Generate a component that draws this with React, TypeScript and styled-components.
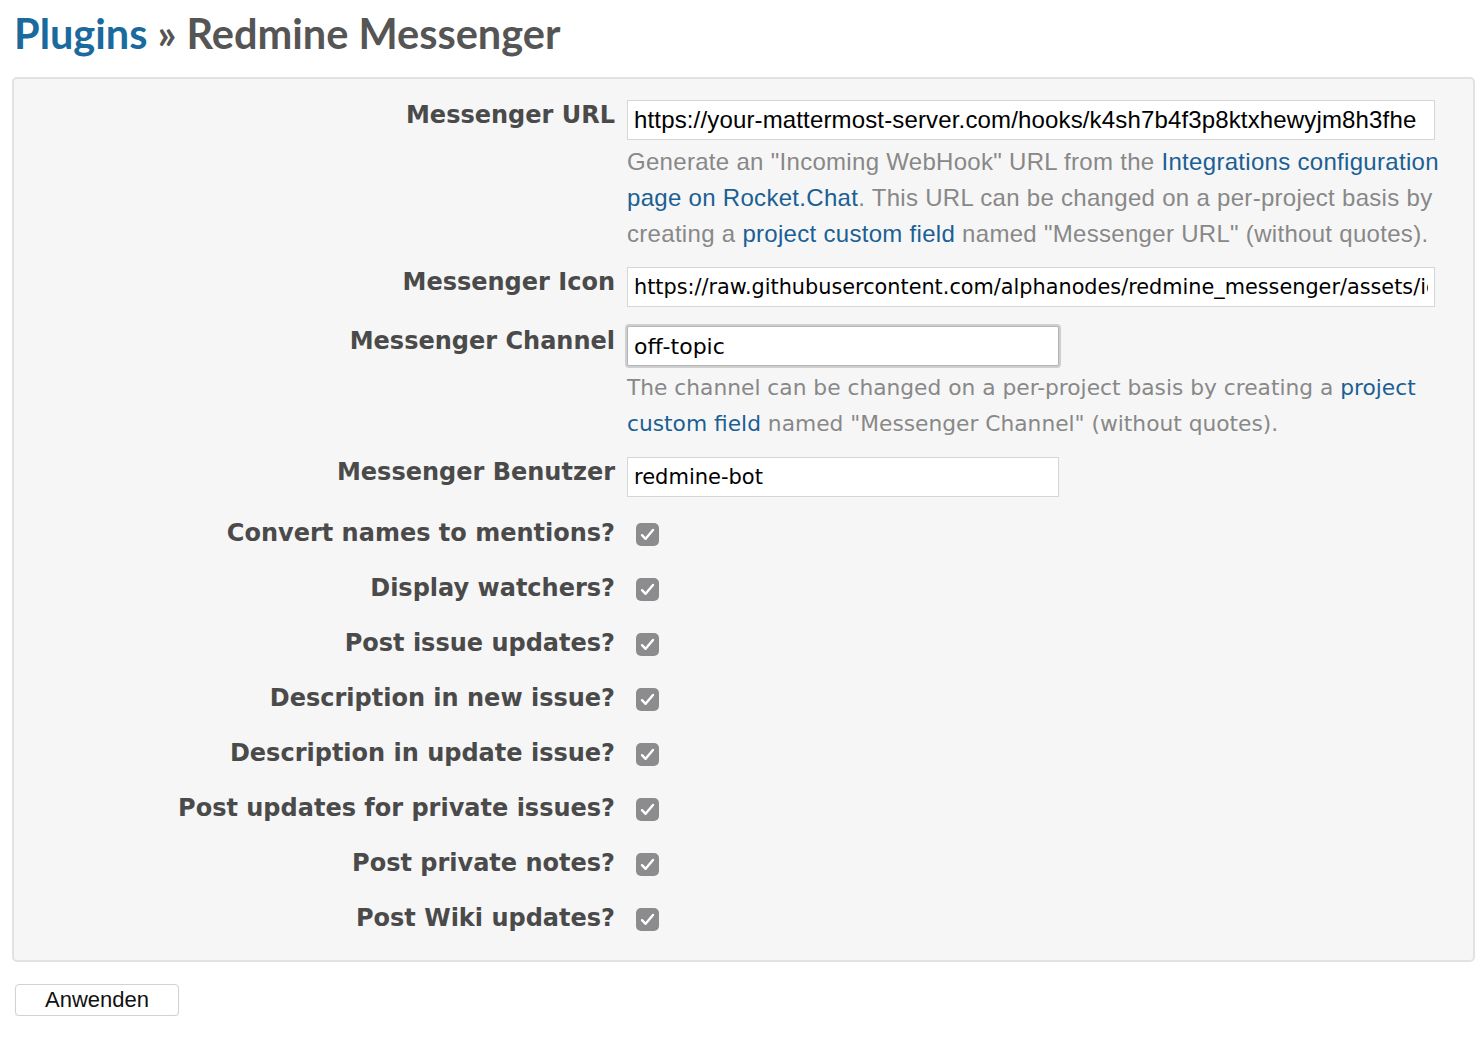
import React from 'react'
import styled, { createGlobalStyle } from 'styled-components'

const GlobalStyle = createGlobalStyle`
    body {
        margin: 0;
        background: #ffffff;
        font-family: "DejaVu Sans", Verdana, sans-serif;
        color: #333;
    }
`

const Page = styled.div`
    padding: 5px 1px 0 12px;
`

const Title = styled.h2`
    margin: 0 0 16px 2px;
    font-family: "Lato", "Open Sans", sans-serif;
    font-weight: 700;
    font-size: 41.5px;
    line-height: 56px;
    color: #555555;
`

const Crumb = styled.a`
    color: #1b6a9e;
    text-decoration: none;
`

const Box = styled.div`
    background: #f6f6f6;
    border: 2px solid #e2e2e2;
    border-radius: 5px;
    padding: 21px 0 15px 0;
`

const Row = styled.div<{ $spacing?: number }>`
    display: grid;
    grid-template-columns: 601px 1fr;
    column-gap: 12px;
    margin-bottom: ${(p) => p.$spacing ?? 0}px;
`

const CheckRow = styled.div`
    display: grid;
    grid-template-columns: 601px 1fr;
    column-gap: 12px;
    height: 55px;
    align-items: center;
`

const Label = styled.label`
    text-align: right;
    font-weight: 700;
    font-size: 24px;
    line-height: 30px;
    color: #4a4a4a;
    white-space: nowrap;
`

const Field = styled.div`
    display: flex;
    flex-direction: column;
    align-items: flex-start;
`

const TextInput = styled.input<{ $width: number; $font?: string; $size?: number; $spacing?: number; $focused?: boolean }>`
    box-sizing: border-box;
    width: ${(p) => p.$width}px;
    height: 40px;
    padding: 0 6px;
    background: #ffffff;
    border: 1px solid ${(p) => (p.$focused ? '#b4b4b4' : '#d6d6d6')};
    box-shadow: ${(p) => (p.$focused ? '0 0 0 2px #cfcfcf' : 'none')};
    border-radius: ${(p) => (p.$focused ? '2px' : '0')};
    font-family: ${(p) => p.$font ?? '"DejaVu Sans", Verdana, sans-serif'};
    font-size: ${(p) => p.$size ?? 21}px;
    letter-spacing: ${(p) => p.$spacing ?? 0}px;
    color: #000;
    outline: none;
    caret-color: #000;
`

const Hint = styled.p<{ $font?: string; $size?: number; $spacing?: number }>`
    margin: 4px 0 0;
    font-family: ${(p) => p.$font ?? '"DejaVu Sans", Verdana, sans-serif'};
    font-size: ${(p) => p.$size ?? 21.75}px;
    letter-spacing: ${(p) => p.$spacing ?? 0}px;
    line-height: 36px;
    color: #888888;
    white-space: nowrap;
`

const Link = styled.a`
    color: #1b5f94;
    text-decoration: none;
`

const Check = styled.span`
    display: inline-flex;
    align-items: center;
    justify-content: center;
    width: 23px;
    height: 23px;
    margin-left: 9px;
    margin-top: 4px;
    border-radius: 5px;
    background: #8c8c8f;
`

const Actions = styled.div`
    padding: 22px 0 0 3px;
`

const Submit = styled.button`
    width: 164px;
    height: 32px;
    background: #ffffff;
    border: 1px solid #d2d2d2;
    border-radius: 4px;
    box-shadow: 0 1px 1px rgba(0, 0, 0, 0.08);
    font-family: "Liberation Sans", Arial, sans-serif;
    font-size: 22px;
    color: #111;
`

const CheckMark = () => (
    <svg width="15" height="13" viewBox="0 0 15 13">
        <path d="M2 7.2 L5.6 10.8 L13 2" fill="none" stroke="#ffffff" strokeWidth="2.4" strokeLinecap="round" strokeLinejoin="round" />
    </svg>
)

const checkboxes = [
    'Convert names to mentions?',
    'Display watchers?',
    'Post issue updates?',
    'Description in new issue?',
    'Description in update issue?',
    'Post updates for private issues?',
    'Post private notes?',
    'Post Wiki updates?',
]

const sans = '"Liberation Sans", Arial, sans-serif'

export default function App() {
    return (
        <Page>
            <GlobalStyle />
            <Title>
                <Crumb href="#">Plugins</Crumb> » Redmine Messenger
            </Title>
            <Box>
                <Row $spacing={15}>
                    <Label>Messenger URL</Label>
                    <Field>
                        <TextInput
                            $width={808}
                            $font={sans}
                            $size={24}
                            $spacing={0.15}
                            readOnly
                            value="https://your-mattermost-server.com/hooks/k4sh7b4f3p8ktxhewyjm8h3fhe"
                        />
                        <Hint $font={sans} $size={24} $spacing={0.3}>
                            Generate an "Incoming WebHook" URL from the <Link href="#">Integrations configuration</Link>
                            <br />
                            <Link href="#">page on Rocket.Chat</Link>. This URL can be changed on a per-project basis by
                            <br />
                            creating a <Link href="#">project custom field</Link> named "Messenger URL" (without quotes).
                        </Hint>
                    </Field>
                </Row>
                <Row $spacing={19}>
                    <Label>Messenger Icon</Label>
                    <Field>
                        <TextInput
                            $width={808}
                            $size={20.8}
                            readOnly
                            value="https://raw.githubusercontent.com/alphanodes/redmine_messenger/assets/icon.png"
                        />
                    </Field>
                </Row>
                <Row $spacing={15}>
                    <Label>Messenger Channel</Label>
                    <Field>
                        <TextInput $width={432} $size={22} $focused autoFocus defaultValue="off-topic" />
                        <Hint>
                            The channel can be changed on a per-project basis by creating a <Link href="#">project</Link>
                            <br />
                            <Link href="#">custom field</Link> named "Messenger Channel" (without quotes).
                        </Hint>
                    </Field>
                </Row>
                <Row $spacing={8}>
                    <Label>Messenger Benutzer</Label>
                    <Field>
                        <TextInput $width={432} readOnly value="redmine-bot" />
                    </Field>
                </Row>
                {checkboxes.map((label) => (
                    <CheckRow key={label}>
                        <Label>{label}</Label>
                        <div>
                            <Check>
                                <CheckMark />
                            </Check>
                        </div>
                    </CheckRow>
                ))}
            </Box>
            <Actions>
                <Submit>Anwenden</Submit>
            </Actions>
        </Page>
    )
}
